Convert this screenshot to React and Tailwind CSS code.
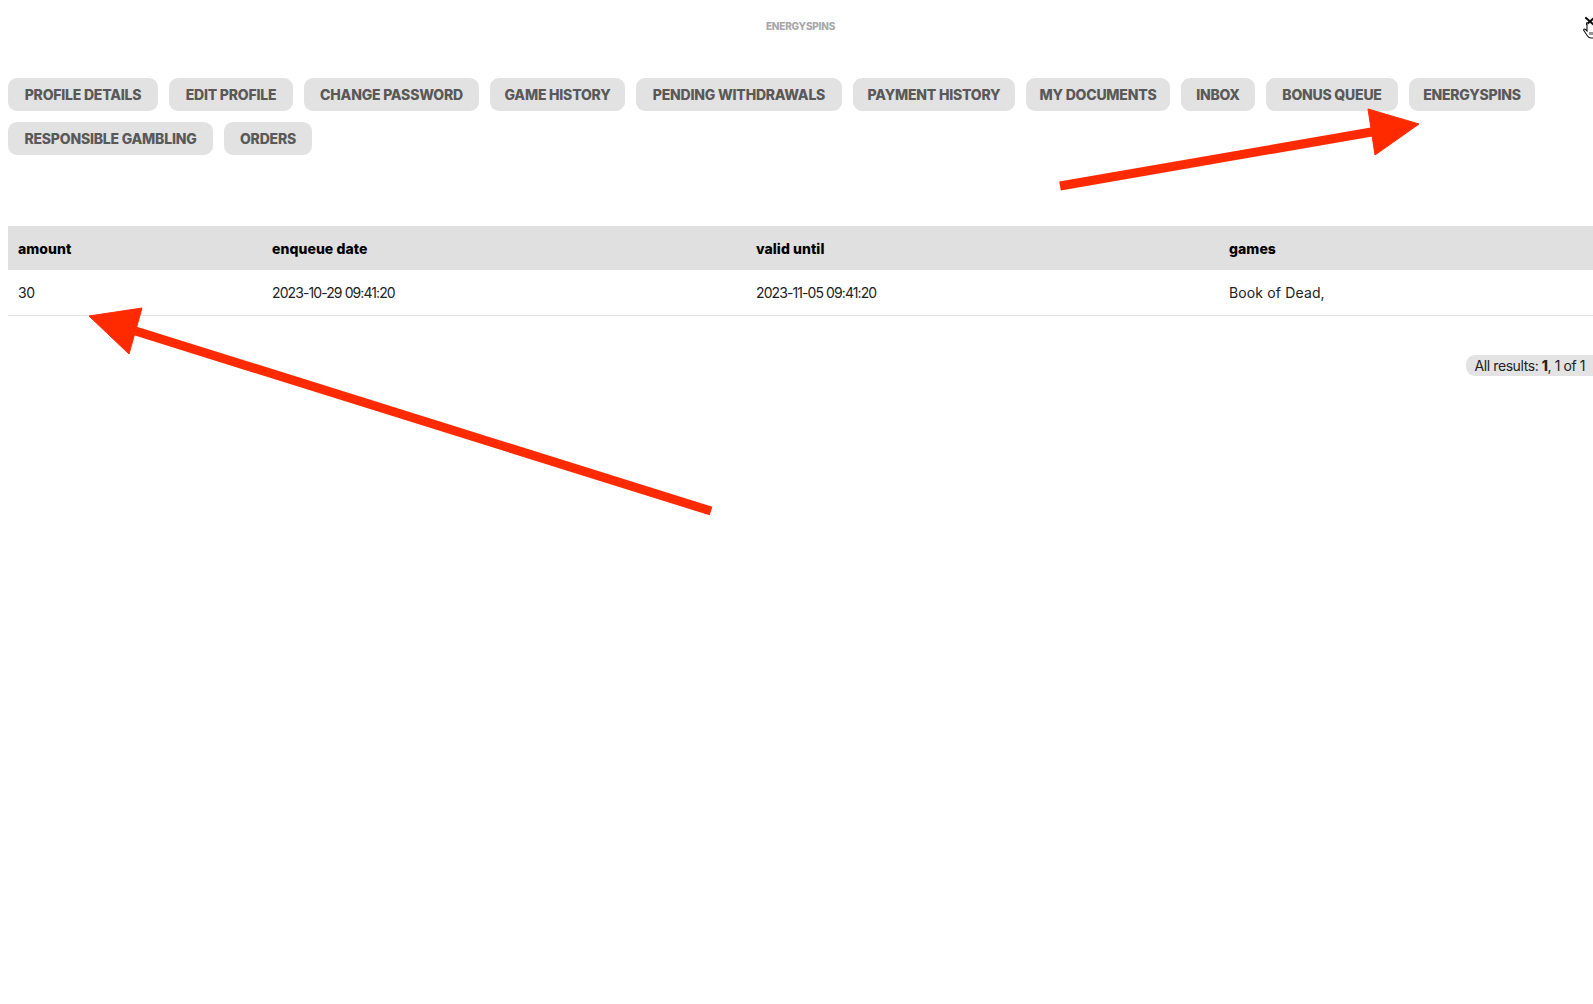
import React from "react";

const tabsRow1 = [
  ["PROFILE DETAILS", "w-[150px]"],
  ["EDIT PROFILE", "w-[124px]"],
  ["CHANGE PASSWORD", "w-[175px]"],
  ["GAME HISTORY", "w-[135px]"],
  ["PENDING WITHDRAWALS", "w-[206px]"],
  ["PAYMENT HISTORY", "w-[162px]"],
  ["MY DOCUMENTS", "w-[144px]"],
  ["INBOX", "w-[74px]"],
  ["BONUS QUEUE", "w-[132px]"],
  ["ENERGYSPINS", "w-[126px]"],
];

const tabsRow2 = [
  ["RESPONSIBLE GAMBLING", "w-[205px]"],
  ["ORDERS", "w-[88px]"],
];

function Tab({ label, w }) {
  return (
    <button
      className={`${w} h-[33px] shrink-0 rounded-[9px] bg-[#e2e2e2] text-[14px] font-extrabold tracking-[-0.015em] text-[#595959] flex items-center justify-center whitespace-nowrap`}
    >
      {label}
    </button>
  );
}

function Arrow({ tip, c1, c2, tail }) {
  const base = [(c1[0] + c2[0]) / 2, (c1[1] + c2[1]) / 2];
  return (
    <g fill="#ff2a00" stroke="#ff2a00">
      <line x1={tail[0]} y1={tail[1]} x2={base[0]} y2={base[1]} strokeWidth="9" />
      <polygon points={`${tip[0]},${tip[1]} ${c1[0]},${c1[1]} ${c2[0]},${c2[1]}`} strokeWidth="1" strokeLinejoin="round" />
    </g>
  );
}

export default function App() {
  return (
    <div
      className="relative w-[1593px] h-[1004px] overflow-hidden bg-white text-[#222]"
      style={{ fontFamily: "Inter, 'Noto Sans', sans-serif" }}
    >
      {/* brand caption */}
      <div className="h-[50px] flex items-center justify-center pl-[8px]">
        <span className="text-[10px] font-extrabold tracking-[-0.02em] text-[#a8a8a8] mt-[2px]">ENERGYSPINS</span>
      </div>

      {/* close control in the top corner, under the pointer */}
      <svg className="absolute left-[1578px] top-[13px]" width="16" height="28" viewBox="0 0 16 28">
        <path d="M8 5 L16 12 M16 5 L9 11" stroke="#111" strokeWidth="2.2" strokeLinecap="round" />
        <path
          d="M9 9 L9 18 L7.5 16.5 C6.5 15.5 5 16.5 6 17.8 L9.5 23 C10.5 24.5 11.5 25 13 25 L16 25"
          fill="#fff"
          stroke="#111"
          strokeWidth="1.1"
        />
        <path d="M12 19 L12 22 M14 19 L14 22" stroke="#111" strokeWidth="0.9" />
      </svg>

      <div className="w-[1600px] pl-[8px]">
        {/* account navigation */}
        <div className="mt-[28px] flex flex-col gap-y-[11px]">
          <div className="flex gap-x-[11px]">
            {tabsRow1.map(([l, w]) => (
              <Tab key={l} label={l} w={w} />
            ))}
          </div>
          <div className="flex gap-x-[11px]">
            {tabsRow2.map(([l, w]) => (
              <Tab key={l} label={l} w={w} />
            ))}
          </div>
        </div>

        {/* free spins table */}
        <table className="mt-[71px] w-full border-collapse text-[14px] text-left">
          <thead>
            <tr className="bg-[#e0e0e0] h-[44px]">
              <th className="w-[254px] pl-[10px] font-extrabold tracking-[0.005em] text-black">amount</th>
              <th className="w-[484px] pl-[10px] font-extrabold tracking-[0.005em] text-black">enqueue date</th>
              <th className="w-[473px] pl-[10px] font-extrabold tracking-[0.005em] text-black">valid until</th>
              <th className="pl-[10px] font-extrabold tracking-[0.005em] text-black">games</th>
            </tr>
          </thead>
          <tbody>
            <tr className="h-[45px] border-b border-[#e4e4e4]">
              <td className="pl-[10px] tracking-[-0.03em]">30</td>
              <td className="pl-[10px] tracking-[-0.065em]">2023-10-29 09:41:20</td>
              <td className="pl-[10px] tracking-[-0.065em]">2023-11-05 09:41:20</td>
              <td className="pl-[10px] tracking-[0.01em]">Book of Dead,</td>
            </tr>
          </tbody>
        </table>

        {/* result counter */}
        <div className="mt-[39px] flex justify-end pr-[1px]">
          <div className="h-[21px] rounded-l-[9px] bg-[#e3e3e3] pl-[9px] pr-[14px] flex items-center text-[14px] tracking-[-0.03em] text-[#222]">
            All results:&nbsp;<b className="font-extrabold">1</b>, 1 of 1
          </div>
        </div>
      </div>

      {/* annotation arrows */}
      <svg className="absolute inset-0 pointer-events-none" width="1593" height="1004" viewBox="0 0 1593 1004">
        <Arrow tip={[1419, 124]} c1={[1368, 109]} c2={[1375, 155]} tail={[1060, 186]} />
        <Arrow tip={[89, 316]} c1={[142, 308]} c2={[129, 354]} tail={[711, 511]} />
      </svg>
    </div>
  );
}
